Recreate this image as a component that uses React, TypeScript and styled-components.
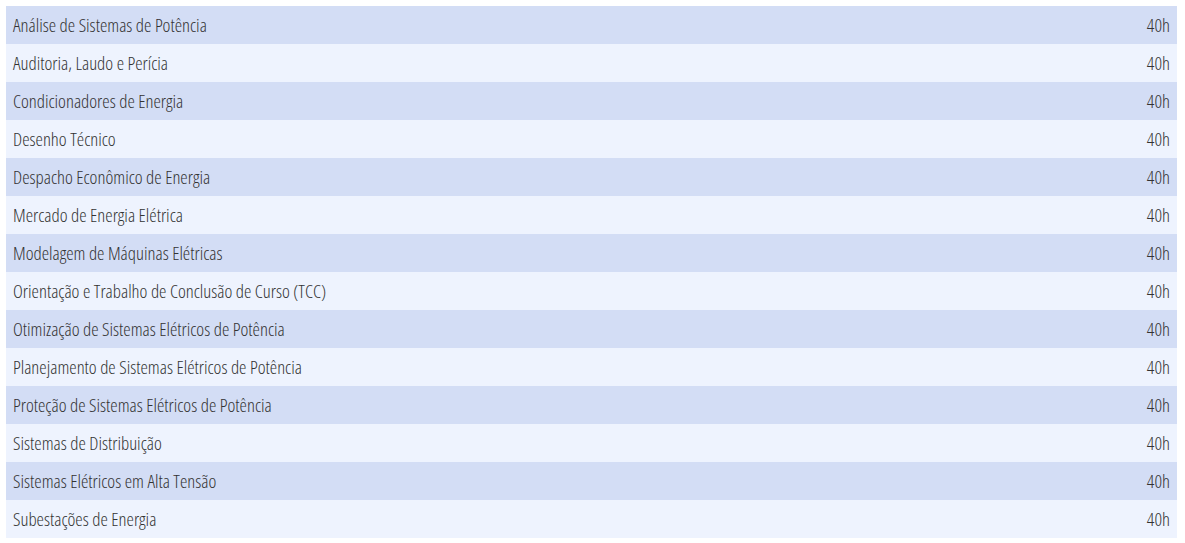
import React from 'react';
import styled, { createGlobalStyle } from 'styled-components';

const GlobalStyle = createGlobalStyle`
  body {
    margin: 0;
    background: #ffffff;
    font-family: "Open Sans", "Liberation Sans", sans-serif;
  }
`;

const Page = styled.div`
  padding: 6px 8px 6px 6px;
`;

const List = styled.div`
  display: flex;
  flex-direction: column;
`;

const Row = styled.div<{ $alt: boolean }>`
  display: flex;
  align-items: center;
  justify-content: space-between;
  box-sizing: border-box;
  height: 38px;
  padding: 0 7px 2px;
  background: ${props => (props.$alt ? '#eef3fe' : '#d3ddf5')};
  color: #333333;
  font-family: "Open Sans", sans-serif;
  font-stretch: 75%;
  font-weight: 300;
  font-size: 18.7px;
`;

const Name = styled.span`
  white-space: nowrap;
`;

const Hours = styled.span`
  white-space: nowrap;
`;

const courses = [
  'Análise de Sistemas de Potência',
  'Auditoria, Laudo e Perícia',
  'Condicionadores de Energia',
  'Desenho Técnico',
  'Despacho Econômico de Energia',
  'Mercado de Energia Elétrica',
  'Modelagem de Máquinas Elétricas',
  'Orientação e Trabalho de Conclusão de Curso (TCC)',
  'Otimização de Sistemas Elétricos de Potência',
  'Planejamento de Sistemas Elétricos de Potência',
  'Proteção de Sistemas Elétricos de Potência',
  'Sistemas de Distribuição',
  'Sistemas Elétricos em Alta Tensão',
  'Subestações de Energia',
];

export default function App() {
  return (
    <>
      <GlobalStyle />
      <Page>
        <List>
          {courses.map((name, i) => (
            <Row key={name} $alt={i % 2 === 1}>
              <Name>{name}</Name>
              <Hours>40h</Hours>
            </Row>
          ))}
        </List>
      </Page>
    </>
  );
}
